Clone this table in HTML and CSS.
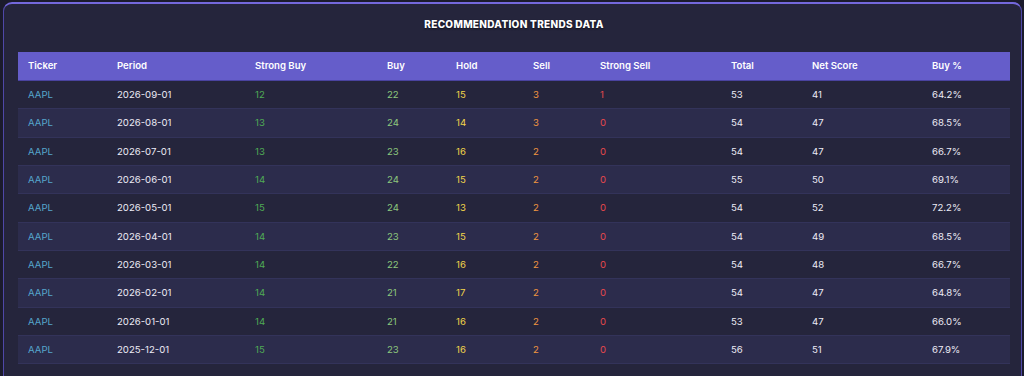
FILE: index.html
```html
<!DOCTYPE html>
<html lang="en">
<head>
<meta charset="utf-8">
<title>Recommendation Trends Data</title>
<link rel="stylesheet" href="styles.css">
</head>
<body>
<section class="card">
  <h2 class="title">Recommendation Trends Data</h2>
  <table class="trends">
    <thead>
      <tr>
        <th class="c-ticker">Ticker</th>
        <th class="c-period">Period</th>
        <th class="c-sb">Strong Buy</th>
        <th class="c-buy">Buy</th>
        <th class="c-hold">Hold</th>
        <th class="c-sell">Sell</th>
        <th class="c-ss">Strong Sell</th>
        <th class="c-total">Total</th>
        <th class="c-net">Net Score</th>
        <th class="c-pct">Buy %</th>
      </tr>
    </thead>
    <tbody>
      <tr><td class="tk">AAPL</td><td>2026-09-01</td><td class="sb">12</td><td class="b">22</td><td class="h">15</td><td class="s">3</td><td class="ss">1</td><td>53</td><td>41</td><td>64.2%</td></tr>
      <tr><td class="tk">AAPL</td><td>2026-08-01</td><td class="sb">13</td><td class="b">24</td><td class="h">14</td><td class="s">3</td><td class="ss">0</td><td>54</td><td>47</td><td>68.5%</td></tr>
      <tr><td class="tk">AAPL</td><td>2026-07-01</td><td class="sb">13</td><td class="b">23</td><td class="h">16</td><td class="s">2</td><td class="ss">0</td><td>54</td><td>47</td><td>66.7%</td></tr>
      <tr><td class="tk">AAPL</td><td>2026-06-01</td><td class="sb">14</td><td class="b">24</td><td class="h">15</td><td class="s">2</td><td class="ss">0</td><td>55</td><td>50</td><td>69.1%</td></tr>
      <tr><td class="tk">AAPL</td><td>2026-05-01</td><td class="sb">15</td><td class="b">24</td><td class="h">13</td><td class="s">2</td><td class="ss">0</td><td>54</td><td>52</td><td>72.2%</td></tr>
      <tr><td class="tk">AAPL</td><td>2026-04-01</td><td class="sb">14</td><td class="b">23</td><td class="h">15</td><td class="s">2</td><td class="ss">0</td><td>54</td><td>49</td><td>68.5%</td></tr>
      <tr><td class="tk">AAPL</td><td>2026-03-01</td><td class="sb">14</td><td class="b">22</td><td class="h">16</td><td class="s">2</td><td class="ss">0</td><td>54</td><td>48</td><td>66.7%</td></tr>
      <tr><td class="tk">AAPL</td><td>2026-02-01</td><td class="sb">14</td><td class="b">21</td><td class="h">17</td><td class="s">2</td><td class="ss">0</td><td>54</td><td>47</td><td>64.8%</td></tr>
      <tr><td class="tk">AAPL</td><td>2026-01-01</td><td class="sb">14</td><td class="b">21</td><td class="h">16</td><td class="s">2</td><td class="ss">0</td><td>53</td><td>47</td><td>66.0%</td></tr>
      <tr><td class="tk">AAPL</td><td>2025-12-01</td><td class="sb">15</td><td class="b">23</td><td class="h">16</td><td class="s">2</td><td class="ss">0</td><td>56</td><td>51</td><td>67.9%</td></tr>
    </tbody>
  </table>
</section>
</body>
</html>
```

FILE: styles.css
```css
html, body {
  margin: 0;
  padding: 0;
  background: #1b1b2c;
  font-family: Inter, "Open Sans", "Liberation Sans", sans-serif;
  color: #ecebf5;
  overflow: hidden;
}

.card {
  margin: 2px 2px 0 3px;
  padding: 0 11px 20px 14px;
  background: #25253c;
  border: 1px solid #4f48a8;
  border-top: 2px solid #7468dc;
  border-radius: 9px;
  min-height: 400px;
}

.title {
  margin: 0;
  padding: 14px 0 0;
  height: 48px;
  line-height: 12px;
  box-sizing: border-box;
  text-align: center;
  font-size: 10px;
  font-weight: 800;
  letter-spacing: 0.3px;
  text-transform: uppercase;
  color: #ffffff;
  text-shadow: 0 1px 2px rgba(0, 0, 0, 0.6);
}

.trends {
  width: 100%;
  border-collapse: collapse;
  table-layout: fixed;
  font-size: 9.6px;
}

.trends th, .trends td { box-sizing: border-box; }

.trends th {
  background: #655dca;
  color: #ffffff;
  font-weight: 600;
  text-align: left;
  padding: 7px 10px;
  height: 28px;
  line-height: 14px;
  border-bottom: 1px solid #4a43a0;
}

.trends td {
  padding: 7px 10px;
  line-height: 13.33px;
  border-bottom: 1px solid #33335a;
  color: #ecebf5;
}

.trends tbody tr:nth-child(even) td {
  background: #2c2c4c;
}

.c-ticker { width: 89px; }
.c-period { width: 138px; }
.c-sb { width: 132px; }
.c-buy { width: 69px; }
.c-hold { width: 77px; }
.c-sell { width: 67px; }
.c-ss { width: 131px; }
.c-total { width: 81px; }
.c-net { width: 120px; }
.c-pct { width: 88px; }

.tk { color: #56a6cc !important; }
.sb { color: #4faa55 !important; }
.b { color: #8cc77c !important; }
.h { color: #f2d54a !important; }
.s { color: #ef9440 !important; }
.ss { color: #e4484c !important; }
```
